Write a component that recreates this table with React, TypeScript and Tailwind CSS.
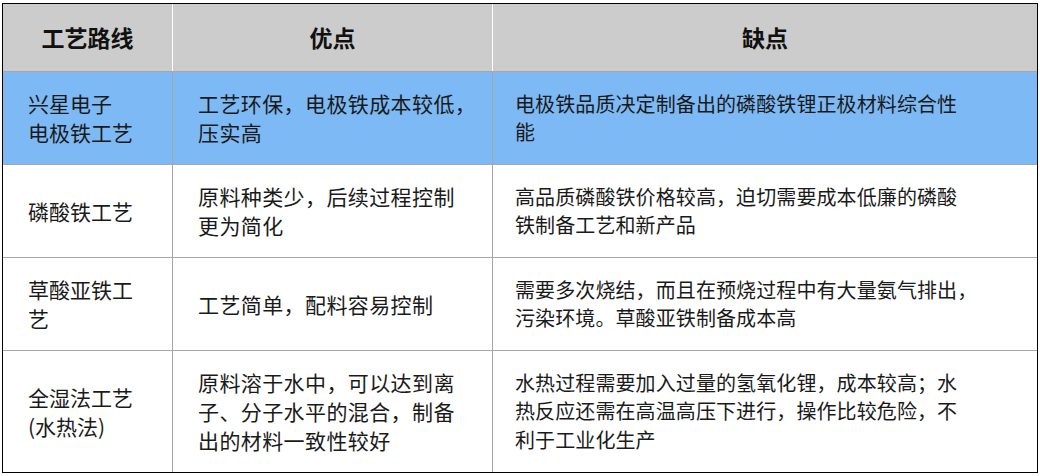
const rows = [
  {
    route: ['兴星电子', '电极铁工艺'],
    pros: ['工艺环保，电极铁成本较低，', '压实高'],
    cons: ['电极铁品质决定制备出的磷酸铁锂正极材料综合性', '能'],
    highlight: true,
    h: 'h-[93px]',
  },
  {
    route: ['磷酸铁工艺'],
    pros: ['原料种类少，后续过程控制', '更为简化'],
    cons: ['高品质磷酸铁价格较高，迫切需要成本低廉的磷酸', '铁制备工艺和新产品'],
    h: 'h-[93px]',
  },
  {
    route: ['草酸亚铁工', '艺'],
    pros: ['工艺简单，配料容易控制'],
    cons: ['需要多次烧结，而且在预烧过程中有大量氨气排出，', '污染环境。草酸亚铁制备成本高'],
    h: 'h-[93px]',
  },
  {
    route: ['全湿法工艺', '(水热法)'],
    pros: ['原料溶于水中，可以达到离', '子、分子水平的混合，制备', '出的材料一致性较好'],
    cons: ['水热过程需要加入过量的氢氧化锂，成本较高；水', '热反应还需在高温高压下进行，操作比较危险，不', '利于工业化生产'],
    h: 'h-[121px]',
  },
];

function Lines({ lines }: { lines: string[] }) {
  return (
    <>
      {lines.map((l, i) => (
        <div key={i} className="whitespace-nowrap">
          {l}
        </div>
      ))}
    </>
  );
}

export default function App() {
  return (
    <div
      className="w-[1040px] h-[476px] bg-white pt-[3px] pl-[2px] text-[#1a1a1a]"
      style={{ fontFamily: '"Noto Sans CJK SC", "Noto Sans", sans-serif' }}
    >
      <div className="w-[1036px] border border-black">
        <div className="flex h-[68px] bg-[#cccccc] border-b border-[#a6a6a6] font-bold text-[23px] text-[#111]">
          <div className="w-[170px] flex items-center justify-center border-r border-white">工艺路线</div>
          <div className="w-[320px] flex items-center justify-center border-r border-white">优点</div>
          <div className="flex-1 flex items-center justify-center">缺点</div>
        </div>
        {rows.map((r, i) => (
          <div
            key={i}
            className={`flex ${r.h} ${i < rows.length - 1 ? 'border-b border-[#a6a6a6]' : ''} ${
              r.highlight ? 'bg-[#7db9f4]' : 'bg-white'
            }`}
          >
            <div className="w-[170px] flex flex-col justify-center pl-[25px] border-r border-[#a6a6a6] text-[21px] leading-[29px]">
              <Lines lines={r.route} />
            </div>
            <div className="w-[320px] flex flex-col justify-center pl-[25px] border-r border-[#a6a6a6] text-[21px] leading-[29px] tracking-[0.4px]">
              <Lines lines={r.pros} />
            </div>
            <div className="flex-1 flex flex-col justify-center pl-[22px] text-[20px] leading-[28.5px] tracking-[0.1px]">
              <Lines lines={r.cons} />
            </div>
          </div>
        ))}
      </div>
    </div>
  );
}
